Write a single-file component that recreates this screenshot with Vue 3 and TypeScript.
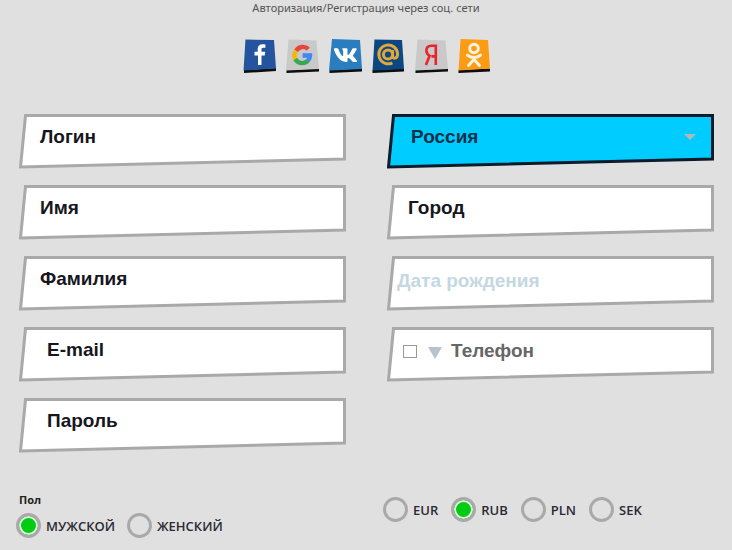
<script setup lang="ts">
interface Field {
  label: string
  inset: number
  kind?: 'select' | 'date' | 'phone'
}

const leftFields: Field[] = [
  { label: 'Логин', inset: 21 },
  { label: 'Имя', inset: 21 },
  { label: 'Фамилия', inset: 21 },
  { label: 'E-mail', inset: 28 },
  { label: 'Пароль', inset: 28 },
]
const rightFields: Field[] = [
  { label: 'Россия', inset: 24, kind: 'select' },
  { label: 'Город', inset: 21 },
  { label: 'Дата рождения', inset: 10, kind: 'date' },
  { label: 'Телефон', inset: 16, kind: 'phone' },
]
const currencies = [
  { code: 'EUR', on: false },
  { code: 'RUB', on: true },
  { code: 'PLN', on: false },
  { code: 'SEK', on: false },
]
const genders = [
  { label: 'МУЖСКОЙ', on: true },
  { label: 'ЖЕНСКИЙ', on: false },
]
const columns = [leftFields, rightFields]
</script>

<template>
  <main class="page">
    <p class="title">Авторизация/Регистрация через соц. сети</p>

    <div class="socials">
      <!-- Facebook -->
      <svg class="social" viewBox="0 0 33 35">
        <polygon points="1,31 33,29 33,32 1,34" fill="#0d0d0d" />
        <polygon points="2.5,0.5 31,1 33,29.5 0.5,31.5" fill="#25549f" />
        <path d="M18.5 26V16.5h3.2l.5-3.7h-3.7v-2.3c0-1.1.4-1.8 1.9-1.8h2V5.4c-.4 0-1.5-.2-2.9-.2-2.9 0-4.8 1.7-4.8 4.9v2.7h-3.2v3.7H15V26z" fill="#fff" />
      </svg>
      <!-- Google -->
      <svg class="social" viewBox="0 0 33 35">
        <polygon points="0.5,31 33,29.5 33,32.5 0.5,34" fill="#0d0d0d" />
        <polygon points="2.5,0.5 30.5,1.5 33,30 0,31.5" fill="#c9c9c9" />
        <g fill="none" stroke-width="4.4">
          <path d="M10.1 11.8A8 8 0 0 1 22.4 10" stroke="#e8453c" />
          <path d="M9.3 20.2A8 8 0 0 1 10.1 11.8" stroke="#f6b704" />
          <path d="M22 21.6A8 8 0 0 1 9.3 20.2" stroke="#34a853" />
          <path d="M16.6 16.5H24A8 8 0 0 1 22 21.6" stroke="#4285f4" />
        </g>
      </svg>
      <!-- VK -->
      <svg class="social" viewBox="0 0 33 35">
        <polygon points="0.5,31 33,29.5 33,32.5 0.5,34" fill="#0d0d0d" />
        <polygon points="3,0 31,1 33,30 0,31.5" fill="#2a7ec0" />
        <path transform="translate(-0.9 -1.8) scale(1.45)" d="M19.376 17.123h-1.744c-.66 0-.864-.525-2.05-1.727-1.033-1-1.49-1.135-1.744-1.135-.356 0-.458.102-.458.593v1.575c0 .424-.135.678-1.253.678-1.846 0-3.896-1.118-5.335-3.202C4.624 10.857 4.03 8.57 4.03 8.096c0-.254.102-.491.593-.491h1.744c.44 0 .61.203.78.677.863 2.49 2.303 4.675 2.896 4.675.22 0 .322-.102.322-.66V9.721c-.068-1.186-.695-1.287-.695-1.71 0-.204.17-.407.44-.407h2.744c.373 0 .508.203.508.643v3.473c0 .372.17.508.271.508.22 0 .407-.136.813-.542 1.254-1.406 2.151-3.574 2.151-3.574.119-.254.322-.491.763-.491h1.744c.525 0 .644.27.525.643-.22 1.017-2.354 4.031-2.354 4.031-.186.305-.254.44 0 .78.186.254.796.779 1.203 1.253.745.847 1.32 1.558 1.473 2.05.17.49-.085.744-.576.744z" fill="#fff" />
      </svg>
      <!-- Mail.ru -->
      <svg class="social" viewBox="0 0 33 35">
        <polygon points="0.5,31 32,29.5 32,32.5 0.5,34" fill="#0d0d0d" />
        <polygon points="2.5,0.5 30,1 32,30 0.5,31.5" fill="#0b4780" />
        <g fill="none" stroke="#e0a63f" stroke-width="3">
          <circle cx="16" cy="15.5" r="4.6" />
          <path d="M20.6 11v6c0 3.4 5 3 5-2A9.4 9.4 0 1 0 20.4 23.8" />
        </g>
      </svg>
      <!-- Yandex -->
      <svg class="social" viewBox="0 0 33 35">
        <polygon points="0.5,31 33,29.5 33,32.5 0.5,34" fill="#0d0d0d" />
        <polygon points="2.5,0.5 30.5,1.5 33,30 0,31.5" fill="#c9c9c9" />
        <path d="M20.8 26V6.7h-4.4c-3.2 0-5 2-5 4.9 0 2.6 1.2 4.1 3.2 5.2L10.9 26M20.8 17.4h-4.4" fill="none" stroke="#e8242a" stroke-width="2.6" />
      </svg>
      <!-- Odnoklassniki -->
      <svg class="social" viewBox="0 0 33 35">
        <polygon points="0.5,31 32,29.5 32,32.5 0.5,34" fill="#0d0d0d" />
        <polygon points="2.5,0 30,1 32,29.5 0.5,31.5" fill="#fb9c14" />
        <g fill="none" stroke="#fdf3dc" stroke-width="3" stroke-linecap="round">
          <circle cx="16" cy="9.5" r="4.3" />
          <path d="M9.5 16.2c4 2.8 9 2.8 13 0M16 18.5v1.5M10.5 26.5 16 20.5l5.5 6" />
        </g>
      </svg>
    </div>

    <section class="form">
      <div v-for="(fields, c) in columns" :key="c" class="col">
        <div
          v-for="f in fields"
          :key="f.label"
          class="field"
          :class="f.kind"
          :style="{ paddingLeft: f.inset + 'px' }"
        >
          <svg class="shape" viewBox="0 0 327 55" preserveAspectRatio="none">
            <polygon points="6.5,1.5 325.5,1.5 325.5,45 1.5,53" />
          </svg>
          <template v-if="f.kind === 'phone'">
            <span class="flag"></span>
            <span class="phone-caret"></span>
          </template>
          <span class="label">{{ f.label }}</span>
          <span v-if="f.kind === 'select'" class="caret"></span>
        </div>
      </div>
    </section>

    <section class="choices">
      <div class="gender">
        <div class="caption">Пол</div>
        <div class="radios">
          <label v-for="g in genders" :key="g.label" class="radio">
            <span class="dot" :class="{ on: g.on }"></span>{{ g.label }}
          </label>
        </div>
      </div>
      <div class="radios currency">
        <label v-for="cur in currencies" :key="cur.code" class="radio">
          <span class="dot" :class="{ on: cur.on }"></span>{{ cur.code }}
        </label>
      </div>
    </section>
  </main>
</template>

<style scoped>
.page {
  width: 732px;
  height: 550px;
  overflow: hidden;
  background: #e0e0e0;
  font-family: "Liberation Sans", Arial, sans-serif;
}
.title {
  margin: 0;
  height: 16px;
  line-height: 16px;
  text-align: center;
  font-family: "Noto Sans", sans-serif;
  font-size: 11.1px;
  color: #555;
}
.socials {
  display: flex;
  gap: 10px;
  margin-top: 23px;
  padding-left: 243px;
}
.social {
  display: block;
  width: 33px;
  height: 35px;
  flex: none;
}
.form {
  display: flex;
  gap: 41px;
  margin-top: 40px;
  padding-left: 19px;
}
.col {
  display: flex;
  flex-direction: column;
  gap: 16px;
  width: 327px;
}
.field {
  position: relative;
  display: flex;
  align-items: center;
  height: 55px;
  padding-bottom: 9px;
  box-sizing: border-box;
  font-size: 19px;
  font-weight: 700;
  color: #16161e;
}
.shape {
  position: absolute;
  inset: 0;
  width: 100%;
  height: 100%;
}
.shape polygon {
  fill: #fff;
  stroke: #a9a9a9;
  stroke-width: 3;
}
.label {
  position: relative;
}
.select .shape polygon {
  fill: #00ccff;
  stroke: #0b1b2b;
}
.select .label {
  color: #08324a;
}
.caret {
  position: absolute;
  right: 18px;
  top: 20px;
  border-left: 6px solid transparent;
  border-right: 6px solid transparent;
  border-top: 6px solid #aeb8b4;
}
.date .label {
  color: #c3d8e3;
  padding-top: 4px;
}
.phone .label {
  color: #666;
  padding-top: 2px;
}
.flag {
  position: relative;
  width: 14px;
  height: 13px;
  box-sizing: border-box;
  border: 1px solid #999;
  background: #fff;
  margin-top: 3px;
}
.phone-caret {
  position: relative;
  margin: 5px 9px 0 11px;
  border-left: 7px solid transparent;
  border-right: 7px solid transparent;
  border-top: 12px solid #b7c3cd;
}
.choices {
  display: flex;
  margin-top: 38px;
  padding-left: 16px;
}
.gender {
  width: 367px;
}
.caption {
  margin-left: 3px;
  height: 22px;
  line-height: 17px;
  font-family: "Open Sans", sans-serif;
  font-size: 11px;
  font-weight: 700;
  color: #222;
}
.radios {
  display: flex;
  gap: 12px;
}
.currency {
  margin-top: 6px;
  gap: 13px;
}
.radio {
  display: flex;
  align-items: center;
  gap: 5px;
  font-family: "Open Sans", sans-serif;
  font-size: 13px;
  font-weight: 600;
  color: #2a2a33;
  height: 25px;
}
.dot {
  width: 25px;
  height: 25px;
  box-sizing: border-box;
  border: 3px solid #a9a9a9;
  border-radius: 50%;
  flex: none;
}
.dot.on {
  background: #00cc11;
  box-shadow: inset 0 0 0 2px #e4f2e4;
}
</style>

<style>
html, body {
  margin: 0;
  background: #e0e0e0;
}
</style>
